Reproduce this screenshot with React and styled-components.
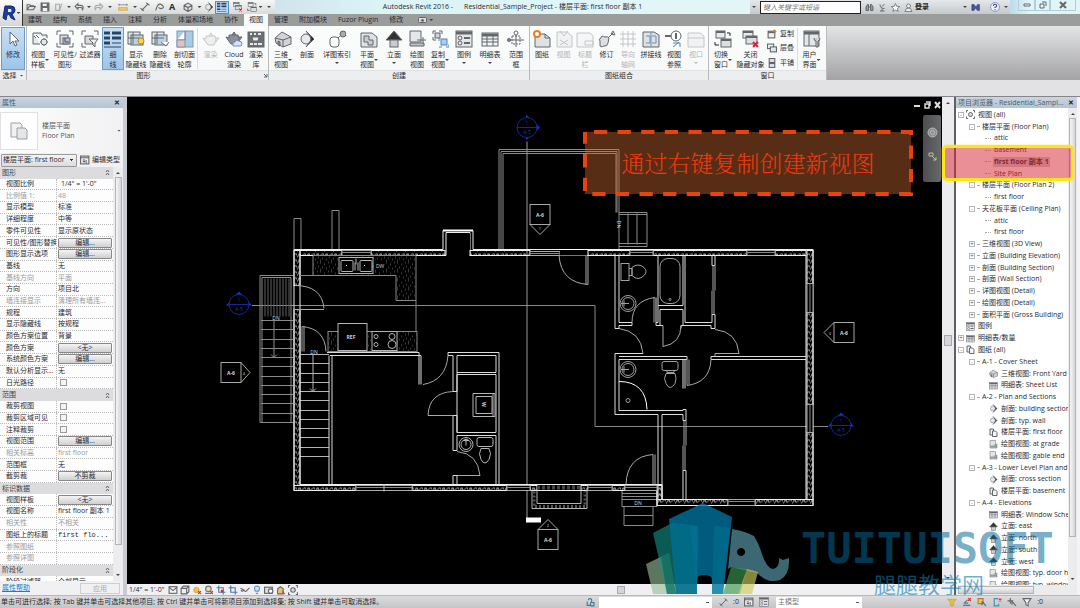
import React from 'react';
import styled, { createGlobalStyle, css } from 'styled-components';

const GlobalStyle = createGlobalStyle`
    * {
        box-sizing: border-box;
    }

    body {
        margin: 0;
        font-family: "Open Sans", "Noto Sans CJK SC", sans-serif;
        font-size: 7px;
        line-height: 10px;
        color: #2b2b2e;
        background: #e2e2e4;
    }

    button, input, select {
        font: inherit;
        color: inherit;
        margin: 0;
        padding: 0;
        border: none;
        background: none;
    }
`;

const Page = styled.div`
    position: relative;
    display: flex;
    flex-direction: column;
    height: 100vh;
    overflow: hidden;
`;

const Caret = styled.span`
    flex: none;
    width: 4px;
    height: 2px;
    background: #444;
    clip-path: polygon(0 0, 100% 0, 50% 100%);
`;

const Svg = styled.svg`
    display: block;
    flex: none;
    fill: none;
    stroke: #63666a;
    stroke-width: 1;
`;

/* ---------- header ---------- */

const Header = styled.header`
    display: grid;
    grid-template-columns: 23px 1fr;
    grid-template-rows: 14px 12px;
    background: #9b9d9d;
`;

const AppButton = styled.button`
    grid-row: 1 / 3;
    display: flex;
    align-items: center;
    justify-content: center;
    gap: 1px;
    background: linear-gradient(#fdfdfd, #d4d6d8);
    border-right: 1px solid #333;
`;

const TitleBar = styled.div`
    display: flex;
    align-items: stretch;
    background: linear-gradient(90deg, #cfe4ec 250px, #dcf4f6 360px, #e2f6f8 700px);
`;

const QuickAccess = styled.div`
    display: flex;
    align-items: center;
    width: 252px;
    padding-left: 1px;
    background: linear-gradient(#f6f6f6, #d9dadb);
`;

const QuickButton = styled.button`
    display: flex;
    align-items: center;
    justify-content: center;
    width: ${(props) => props.$width}px;
    height: 13px;
    font-size: 9px;
    ${(props) => props.$active && css`
        background: #bfdcf5;
        border: 1px solid #4b8fc9;
    `}
`;

const Title = styled.h1`
    flex: 1;
    display: flex;
    justify-content: center;
    gap: 11px;
    margin: 0;
    font-size: 7px;
    font-weight: 400;
    line-height: 14px;
    white-space: nowrap;
`;

const InfoCenter = styled.div`
    display: flex;
    align-items: center;
    gap: 4px;
    padding: 0 2px;
    background: linear-gradient(#e4e8ea, #c6c9cb);
`;

const SearchInput = styled.input`
    width: 101px;
    height: 13px;
    padding: 0 2px;
    background: #fff;
    border: 1px solid #222;
    font-style: italic;

    &::placeholder {
        color: #777;
    }
`;

const InfoButton = styled.button`
    display: flex;
    align-items: center;
    gap: 2px;
    min-width: 9px;
    font-weight: 700;
`;

const Spacer = styled.span`
    width: ${(props) => props.$width}px;
`;

const WindowButtons = styled.div`
    display: flex;
    align-items: flex-start;
    width: 70px;
    padding-left: 8px;
    background: linear-gradient(90deg, #bcdcea, #e0f5f8 20px);
`;

const WindowButton = styled.button`
    display: flex;
    align-items: center;
    justify-content: center;
    width: ${(props) => props.$width}px;
    height: 11px;
    border: 1px solid #b5cdd6;
    border-top: none;
`;

const Tabs = styled.nav`
    display: flex;
    gap: 1px;
    align-items: stretch;
`;

const Tab = styled.button`
    padding: 0 5px;
    line-height: 12px;
    background: ${(props) => (props.$active ? '#f7f8f8' : 'transparent')};
`;

const TabOptions = styled.button`
    display: flex;
    align-items: center;
    gap: 2px;
    margin-left: 9px;
`;

/* ---------- ribbon ---------- */

const Ribbon = styled.div`
    display: flex;
    height: 54px;
    background: linear-gradient(#e3e4e6, #a3a3a5);
`;

const Panel = styled.section`
    display: flex;
    flex-direction: column;
    background: linear-gradient(#fbfdfd, #f6f7f7);
    border-right: 1px solid #b9bbbd;
`;

const PanelBody = styled.div`
    flex: 1;
    display: flex;
    padding: 1px 1px 0;
`;

const PanelTitle = styled.div`
    display: flex;
    align-items: center;
    justify-content: center;
    gap: 3px;
    height: 10px;
    background: #edeeef;
    border-top: 1px solid #e0e1e2;
`;

const TitleText = styled.span`
    flex: ${(props) => (props.$fill ? 1 : 'none')};
    text-align: center;
`;

const ToolButton = styled.button`
    display: flex;
    flex-direction: column;
    align-items: center;
    gap: 2px;
    width: ${(props) => props.$width}px;
    height: 43px;
    padding-top: 3px;
    line-height: 10px;
    white-space: nowrap;
    opacity: ${(props) => (props.$disabled ? 0.35 : 1)};
    ${(props) => props.$active && css`
        background: linear-gradient(#cbe0f3, #9cc4ea);
        box-shadow: inset 0 0 0 1px #6f9dc6;
    `}
`;

const ToolLabel = styled.span`
    display: flex;
    flex-direction: ${(props) => (props.$caret === 'below' ? 'column' : 'row')};
    align-items: center;
    gap: ${(props) => (props.$caret === 'below' ? 2 : 0)}px;
`;

const Lines = styled.span`
    display: flex;
    flex-direction: column;
    align-items: center;
`;

const PanelDivider = styled.span`
    width: 1px;
    margin: 1px 0;
    background: #dcdddf;
`;

const SmallTools = styled.div`
    display: flex;
    flex-direction: column;
    justify-content: space-around;
    width: 32px;
    height: 43px;
    padding-left: 2px;
`;

const SmallTool = styled.button`
    display: flex;
    align-items: center;
    gap: 3px;
`;

const OptionsBar = styled.div`
    height: 16px;
    background: #e2e2e4;
`;

const icons = {
    cursor: <path d="M6 2v12l3-3 2 5 2-1-2-4h4z" fill="#fff" />,
    template: <g><path d="M2 3h8l1 2h5v3M2 3v11h7" fill="#e4e6e8" /><path d="M13 8v8M9 12h8M3 6l2 2M5 5l3 3" /><circle cx="13" cy="12" r="3" fill="#e4e6e8" /></g>,
    visibility: <g><path d="M1 5V1h4M13 1h4v4M1 13v4h4M17 13v4h-4" /><rect x="4" y="5" width="8" height="9" fill="#d8dade" /><rect x="7" y="8" width="7" height="6" fill="#b8bdd2" /><path d="M9 8v4h4" stroke="#4a4c66" strokeWidth="1" /></g>,
    filter: <g><path d="M1 5V1h4M13 1h4v4M1 13v4h4" /><path d="M4 6h8v8H4z" fill="#d8dade" /><path d="M8 9h9l-3 4v4l-2-2v-2z" fill="#eee" /></g>,
    thin: <g stroke="#274468"><path d="M0 3h6M8 3h9M0 8h6M8 8h9M0 13h6" strokeWidth="3" /><path d="M8 13h9M0 17h17" /></g>,
    show: <g><rect x="1" y="2" width="12" height="12" fill="#dfe8ef" /><rect x="4" y="5" width="12" height="10" fill="#b9d4e8" /><path d="M6 2v12M1 8h12" /><circle cx="14" cy="11" r="3" fill="#ffd44a" stroke="#b98b10" /></g>,
    hide: <g><rect x="1" y="2" width="12" height="12" fill="#dfe8ef" /><rect x="4" y="5" width="12" height="10" fill="#b9d4e8" /><path d="M6 2v12M1 8h12" /><path d="M10 12l5 4 3-4" fill="#fff" stroke="#667" /></g>,
    cut: <g><rect x="1" y="1" width="16" height="16" fill="#a9cbe6" stroke="#7b98b0" /><path d="M9 1v9H1" fill="#fff" /><path d="M1 10h8v7H1z" fill="#e7c0b8" stroke="#7b98b0" /></g>,
    teapot: <path d="M4 6h9l1 4-2 5H6L3 11 1 8l3 1zM14 8h3l-3 4M7 6l2-3 2 3" fill="#d6d8dc" />,
    teapotCloud: <g><path d="M4 5h9l1 4-2 5H6L3 10 1 7l3 1zM14 7h3l-3 4M7 5l2-3 2 3" fill="#8c9096" /><path d="M8 16q-1-4 2-4 1-3 4-1 3 0 3 3 0 2-2 2z" fill="#d5e4f4" stroke="#6d8ec0" /></g>,
    gallery: <g><rect x="1" y="2" width="16" height="15" fill="#6b6e74" /><path d="M3 4h2M7 4h2M11 4h3M3 14h3M7 14h3M11 14h4" stroke="#e8e8e8" strokeWidth="2" /><path d="M5 7h7l-1 4H6z" fill="#eee" /></g>,
    house: <g><path d="M1 8l7-6 9 5v7l-8 3-7-4z" fill="#d2d4d8" /><path d="M1 8l8 2 8-3M9 10v7" /><path d="M4 11v4l2 1v-4z" fill="#888c92" /></g>,
    section: <g><circle cx="8" cy="9" r="5" fill="#e6e8ea" /><path d="M8 1l8 8-8 8 3-4q4-4 0-8z" fill="#222" /></g>,
    callout: <g><rect x="2" y="7" width="9" height="10" rx="3" /><path d="M10 8l3-3" /><circle cx="15" cy="4" r="3" fill="#aaa" /></g>,
    plan: <g><path d="M1 3h11l5 4v10H1z" fill="#dfe2e5" /><path d="M4 6h5v4h4v5H8v-3H4z" fill="#c8cbd0" /></g>,
    elevation: <g><path d="M9 1l8 9H1z" fill="#333" /><rect x="5" y="10" width="8" height="7" fill="#c9ccd0" /></g>,
    drafting: <g><path d="M2 1h11v11H2z" fill="#e4e6e8" /><path d="M2 13h14v3H2zM9 10h9M15 7v7" fill="#bfc2c7" /></g>,
    duplicate: <g><path d="M2 4V1h3M8 1h3v3M2 7v3h3" /><rect x="4" y="3" width="5" height="5" fill="#d0d2d5" /><rect x="10" y="9" width="6" height="6" fill="#a9cdf0" stroke="#4d86c0" /><path d="M8 17h3M15 17h3v-3M8 11v-3" stroke="#4d86c0" /></g>,
    legend: <g><rect x="1" y="1" width="16" height="16" fill="#e4e6e8" /><path d="M1 3h16" strokeWidth="3" /><circle cx="5" cy="8" r="2" /><circle cx="5" cy="13" r="2" /><path d="M9 8h6M9 13h6" strokeWidth="2" /></g>,
    schedule: <g><rect x="1" y="3" width="16" height="13" fill="#f2f3f4" /><path d="M1 5h16" strokeWidth="3" /><path d="M1 9h16M1 12h16M6 6v10M12 6v10" /></g>,
    scope: <g><path d="M9 4v13M1 10h16" /><path d="M5 6h8v8H5z" strokeDasharray="2 1" /><circle cx="9" cy="3" r="2" fill="#fff" /><circle cx="2" cy="10" r="1.500" fill="#88b" /></g>,
    sheet: <g><path d="M2 4h10l5 4v9H2z" fill="#dfe2e5" /><path d="M12 4v4h5" /><circle cx="4" cy="4" r="3" stroke="#e08328" strokeWidth="2" fill="#fff" /></g>,
    sheetView: <g><path d="M2 2h10l5 4v11H2z" fill="#dfe2e5" /><path d="M5 1l4 5 4-5M5 10l8 5M13 10l-8 5" /></g>,
    titleBlock: <g><path d="M1 3h13l3 3v11H1z" fill="#eceded" /><path d="M9 11h8v4H9z" /></g>,
    revision: <g><path d="M2 9q-2-2 1-3 0-3 4-1 3-1 4 1l-1 5q-1 4-4 3-4 2-4-1z" fill="#dcdee1" transform="translate(0 2)" /><path d="M10 8l5-5M13 4l2-3 2 4z" /></g>,
    grid: <path d="M4 1v16M9 1v16M14 1v16M1 4h16M1 9h16M1 14h16" />,
    matchline: <g><path d="M1 2h11l5 3v12H1z" fill="#dfe2e5" /><path d="M9 2v15M4 6h4v7H4M10 6h4v7h-4" stroke="#6a8fb8" /></g>,
    viewRef: <g><circle cx="11" cy="6" r="5" fill="#fff" /><path d="M0 6h6M11 3v6" strokeWidth="2" /><path d="M8 13h7v4M8 17l6-5" stroke="#4d86c0" /></g>,
    viewport: <g><path d="M1 3h12l4 3v11H1z" fill="#e3e4e6" /><path d="M1 8h16" /></g>,
    switchWin: <g><rect x="2" y="1" width="9" height="7" fill="#e8eaec" /><rect x="7" y="9" width="10" height="8" fill="#dcdfe2" /><path d="M2 2h9M7 10h10" strokeWidth="2" /><path d="M13 3h3v3M5 15H1v-3" stroke="#222" /></g>,
    closeWin: <g><rect x="1" y="1" width="10" height="7" fill="#e8eaec" /><rect x="4" y="6" width="11" height="8" fill="#dcdfe2" /><path d="M1 2h10M4 7h11" strokeWidth="2" /><path d="M11 12l5 5M16 12l-5 5" stroke="#d2243c" strokeWidth="2" /></g>,
    userUi: <g><rect x="1" y="1" width="15" height="15" fill="#e4e6e8" /><path d="M1 3h15" strokeWidth="3" /><path d="M6 4v12" /><path d="M11 8q0 3 2 3v6h2v-6q2 0 2-3" fill="#ccc" /></g>,
    copyWin: <g><rect x="2" y="4" width="12" height="12" fill="#eef0f2" strokeWidth="2" /><path d="M2 6h12" strokeWidth="3" /><path d="M12 2l4 4" stroke="#e07828" strokeWidth="4" /></g>,
    cascade: <g strokeWidth="2"><rect x="1" y="2" width="11" height="8" /><rect x="6" y="7" width="11" height="9" fill="#e4e6e8" /></g>,
    tile: <g strokeWidth="2"><rect x="4" y="1" width="10" height="7" fill="#e4e6e8" /><rect x="4" y="10" width="10" height="7" fill="#e4e6e8" /></g>,
    open: <path d="M2 14V5h5l2 2h6M2 14l4-6h11l-4 6z" strokeWidth="2" />,
    save: <g><path d="M2 2h14v14H2z" fill="#666a70" strokeWidth="2" /><path d="M5 3h7v4H5zM5 11h8v5H5z" fill="#f2f2f2" stroke="none" /></g>,
    sync: <g stroke="#aaa" strokeWidth="2"><path d="M3 4h7v11H3z" /><path d="M14 3l-4 12" /></g>,
    undo: <path d="M7 3L2 8l5 5v-3h5q4 0 3 5 4-9-3-9H7z" strokeWidth="2" />,
    redo: <path d="M11 3l5 5-5 5v-3H6q-4 0-3 5-4-9 3-9h5z" stroke="#aaa" strokeWidth="2" />,
    measure: <g stroke="#d79a24"><path d="M1 10h16v5H1z" fill="#f0c568" /><path d="M1 5h16M2 3v4M16 3v4" stroke="#555" /></g>,
    dimension: <path d="M3 15L15 3M1 11l6 5M11 1l6 5" strokeWidth="2" />,
    tag: <path d="M3 15l3-8M6 7q4-6 9-1t-3 6l-4-2" strokeWidth="2" />,
    box3d: <path d="M9 2l7 4v7l-7 4-7-4V6zM2 6l7 4 7-4M9 10v7" strokeWidth="2" fill="#ddd" />,
    sun: <g><circle cx="8" cy="9" r="5" fill="#f3c04a" stroke="#c88a20" /><path d="M11 11l5 5M16 11l-5 5" stroke="#c9302c" strokeWidth="2" /></g>,
    cube: <g strokeWidth="2"><path d="M2 6h10v10H2zM2 6l4-4h10v10l-4 4M12 6l4-4" fill="#eee" /></g>,
    shadow: <g><circle cx="8" cy="7" r="5" fill="#e8dca8" stroke="#777" strokeWidth="2" /><path d="M2 15h9" strokeWidth="2" /><path d="M11 11l5 5M16 11l-5 5" stroke="#c9302c" strokeWidth="2" /></g>,
    crop: <g strokeWidth="2"><path d="M5 1v12h12M1 5h12v12" stroke="#5078a0" /><path d="M9 9l4 4M13 9l-4 4" stroke="#c9302c" /></g>,
    cropView: <path d="M5 1v12h12M1 5h12v12" stroke="#3f78b4" strokeWidth="2" />,
    glasses: <path d="M1 6l6 3q3 5 5 1l5-5M7 9q-4 4-5 0" strokeWidth="2" />,
    bulb: <path d="M6 11q-4-9 3-9t3 9zM7 15h4" fill="#cfe6f7" stroke="#5e96c2" strokeWidth="2" />,
    camera: <g strokeWidth="2"><rect x="1" y="4" width="14" height="11" fill="#ddd" /><circle cx="12" cy="11" r="4" fill="#fff" /></g>,
    paint: <g strokeWidth="2"><path d="M3 16V7l5-4 5 4v9z" fill="#e9c46a" /><path d="M11 12l5 4" stroke="#c33" /></g>,
    scale: <g strokeWidth="2"><rect x="2" y="3" width="14" height="12" fill="#f3f3f3" /><path d="M2 4l7 6 7-6" /></g>,
    binoculars: <path d="M2 15V8l3-5h2v12zM16 15V8l-3-5h-2v12zM7 8h4" fill="#999" strokeWidth="2" />,
    dish: <path d="M4 3q0 8 9 8M8 7l5-5M8 11v5M4 16h9" strokeWidth="2" />,
    star: <path d="M9 1l2.400 5.600 6 .5-4.600 4 1.400 6L9 13.900 3.800 17l1.400-6-4.600-4 6-.4z" fill="#fff" strokeWidth="1.500" />,
    person: <path d="M9 2a4 4 0 1 1 0 8 4 4 0 0 1 0-8zM2 17q1-7 7-7t7 7z" fill="#eee" strokeWidth="1.500" />,
    exchange: <path d="M2 3h4l4 5 3-5h4v12h-4l-4-5-3 5H2zM2 3v12" fill="#4356a0" stroke="#333b80" />,
    help: <g><circle cx="9" cy="9" r="8" fill="#eef0fb" stroke="#5560a0" /><path d="M6 7q0-3 3-3t3 3q0 1-3 3v1M9 13v2" stroke="#3a4590" strokeWidth="2" /></g>,
    link: <path d="M4 8v7h6v-5M6 6a3 3 0 0 1 6 0v3M10 10h6v6h-6" stroke="#3a7ba0" strokeWidth="2" />,
    funnel: <path d="M2 3h14l-5 7v6l-4-2v-4z" fill="#f5f5f5" strokeWidth="2" />,
    funnelYellow: <path d="M1 4h16l-5 6v6H6v-6z" fill="#e8bb3c" stroke="#c99a30" strokeWidth="1" />,
    selectX: <g strokeWidth="2"><path d="M2 15h13M4 11l6-6M3 11h8" stroke="#4a7ba0" /><path d="M11 2l5 5M16 2l-5 5" stroke="#c9302c" /></g>,
    selectPin: <g strokeWidth="2"><path d="M2 3h9v9H2z" fill="#f0c568" stroke="#c07a30" /><path d="M9 8l7 8M9 8v7" /></g>,
    selectFace: <g strokeWidth="2"><path d="M11 3H4v13h8v-4" stroke="#4a8fa8" /><path d="M12 3l5 5M17 3l-5 5" stroke="#c9302c" /></g>,
    drag: <path d="M6 2v10M1 7h10M9 8l7 8M9 8v6" strokeWidth="2" />,
    region: <g strokeWidth="2"><circle cx="9" cy="9" r="4" fill="#ddd" /><path d="M1 5V1h3M14 1h3v4M1 13v4h3M17 13v4h-3" /></g>,
    worksets: <g strokeWidth="2"><rect x="1" y="2" width="15" height="14" fill="#eee" /><path d="M1 5h15M5 9h4M5 12h4M11 9v6" /></g>,
    pages: <g strokeWidth="2"><path d="M2 2h7v12H2z" fill="#eef0f2" /><path d="M7 6h6l3 3v8H7z" fill="#f4f5f6" /></g>,
};

const Icon = ({ name, size = 18 }) => (
    <Svg width={size} height={size} viewBox="0 0 18 18" aria-hidden="true">{icons[name]}</Svg>
);

const quickTools = [
    { icon: 'open', w: 14 },
    { icon: 'save', w: 14 },
    { icon: 'sync', w: 14 },
    { w: 6 },
    { icon: 'undo', w: 14 },
    { w: 6 },
    { icon: 'redo', w: 14 },
    { w: 8 },
    { icon: 'measure', w: 18 },
    { w: 6 },
    { icon: 'dimension', w: 14 },
    { icon: 'tag', w: 13 },
    { text: 'A', w: 14 },
    { icon: 'box3d', w: 18 },
    { w: 5 },
    { icon: 'section', w: 13 },
    { icon: 'thin', w: 14, active: true },
    { icon: 'closeWin', w: 18 },
    { icon: 'switchWin', w: 10 },
    { w: 7 },
    { w: 10 },
];

const tabs = ['建筑', '结构', '系统', '插入', '注释', '分析', '体量和场地', '协作', '视图', '管理', '附加模块', 'Fuzor Plugin', '修改'];

const graphicTools = [
    { icon: 'template', lines: ['视图', '样板'], w: 24, caret: 'side' },
    { icon: 'visibility', lines: ['可见性/', '图形'], w: 26 },
    { icon: 'filter', lines: ['过滤器'], w: 24 },
    { icon: 'thin', lines: ['细', '线'], w: 22, active: true },
    { icon: 'show', lines: ['显示', '隐藏线'], w: 24 },
    { icon: 'hide', lines: ['删除', '隐藏线'], w: 24 },
    { icon: 'cut', lines: ['剖切面', '轮廓'], w: 25 },
    { divider: true },
    { icon: 'teapot', lines: ['渲染'], w: 25, disabled: true },
    { icon: 'teapotCloud', lines: ['Cloud', '渲染'], w: 22 },
    { icon: 'gallery', lines: ['渲染', '库'], w: 22 },
];

const createTools = [
    { icon: 'house', lines: ['三维', '视图'], w: 26, caret: 'side' },
    { icon: 'section', lines: ['剖面'], w: 22 },
    { icon: 'callout', lines: ['详图索引'], w: 38, caret: 'below' },
    { icon: 'plan', lines: ['平面', '视图'], w: 26, caret: 'side' },
    { icon: 'elevation', lines: ['立面'], w: 24, caret: 'below' },
    { icon: 'drafting', lines: ['绘图', '视图'], w: 22 },
    { icon: 'duplicate', lines: ['复制', '视图'], w: 24, caret: 'side' },
    { icon: 'legend', lines: ['图例'], w: 24, caret: 'below' },
    { icon: 'schedule', lines: ['明细表'], w: 28, caret: 'below' },
    { icon: 'scope', lines: ['范围', '框'], w: 24 },
];

const sheetTools = [
    { icon: 'sheet', lines: ['图纸'], w: 22 },
    { icon: 'sheetView', lines: ['视图'], w: 21, disabled: true },
    { icon: 'titleBlock', lines: ['标题', '栏'], w: 22, disabled: true },
    { icon: 'revision', lines: ['修订'], w: 21 },
    { icon: 'grid', lines: ['导向', '轴网'], w: 22, disabled: true },
    { icon: 'matchline', lines: ['拼接线'], w: 24 },
    { icon: 'viewRef', lines: ['视图', '参照'], w: 22 },
    { icon: 'viewport', lines: ['视口'], w: 22, caret: 'below', disabled: true },
];

const Tool = ({ tool }) => {
    if (tool.divider) return <PanelDivider />;
    return (
        <ToolButton $width={tool.w} $active={tool.active} $disabled={tool.disabled} disabled={tool.disabled}>
            <Icon name={tool.icon} size={18} />
            <ToolLabel $caret={tool.caret}>
                <Lines>
                    {tool.lines.map((line) => <span key={line}>{line}</span>)}
                </Lines>
                {tool.caret && <Caret />}
            </ToolLabel>
        </ToolButton>
    );
};

const RibbonPanel = ({ title, tools }) => (
    <Panel>
        <PanelBody>
            {tools.map((tool, i) => <Tool key={i} tool={tool} />)}
        </PanelBody>
        <PanelTitle>{title}</PanelTitle>
    </Panel>
);

/* ---------- properties palette ---------- */

const Workspace = styled.main`
    flex: 1;
    display: flex;
    min-height: 0;
    border-top: 1px solid #85868c;
`;

const Properties = styled.aside`
    display: flex;
    flex-direction: column;
    width: 127px;
    background: #f1f1f3;
    border-right: 4px solid #c9cbd0;
`;

const PaletteHeader = styled.div`
    display: flex;
    align-items: center;
    justify-content: space-between;
    height: 11px;
    padding: 0 2px;
    color: #4c5a68;
    background: linear-gradient(#c9d5e1, #b4c4d4);
    white-space: nowrap;
`;

const CloseButton = styled.button`
    padding: 0 1px;
    font-weight: 700;
    color: #222;
`;

const TypeSelector = styled.button`
    display: flex;
    align-items: center;
    gap: 4px;
    height: 45px;
    padding-right: 2px;
    text-align: left;
    color: #55565a;
    background: linear-gradient(90deg, #fdfdfd, #f1f1f3);
`;

const TypeThumb = styled.span`
    display: flex;
    align-items: center;
    justify-content: center;
    width: 38px;
    height: 38px;
    background: #fff;
    border: 1px solid #e0e0e2;
`;

const TypeName = styled.span`
    flex: 1;
`;

const TypeRow = styled.div`
    display: flex;
    align-items: center;
    gap: 3px;
    height: 14px;
    padding-left: 1px;
`;

const TypeSelect = styled.select`
    width: 76px;
    height: 13px;
    padding: 0 1px;
    appearance: none;
    border: 1px solid #999;
    border-radius: 1px;
    background: linear-gradient(45deg, transparent 50%, #333 50%) right 5px center / 2px 2px no-repeat,
        linear-gradient(-45deg, transparent 50%, #333 50%) right 3px center / 2px 2px no-repeat,
        linear-gradient(#f4f4f4, #dcdcde);
`;

const EditType = styled.button`
    display: flex;
    align-items: center;
    gap: 2px;
`;

const PropScroll = styled.div`
    flex: 1;
    display: flex;
    min-height: 0;
    overflow: hidden;
`;

const PropGrid = styled.div`
    flex: 1;
    display: grid;
    grid-auto-rows: minmax(0, 1fr);
    height: calc(100% + 7px);
    min-width: 0;
    background: #fdfdfd;
`;

const PropRow = styled.div`
    display: grid;
    grid-template-columns: 57px 1fr;
    border-bottom: 1px dotted #bbb;
    color: ${(props) => (props.$muted ? '#9a9a9d' : '#2b2b2e')};
`;

const PropLabel = styled.label`
    display: flex;
    align-items: center;
    padding-left: 6px;
    overflow: hidden;
    white-space: nowrap;
    border-right: 1px dotted #bbb;
`;

const PropValue = styled.div`
    display: flex;
    align-items: center;
    min-width: 0;
    padding: 0 1px;
`;

const PropInput = styled.input`
    width: 100%;
    line-height: 10px;
    height: 10px;
    padding-left: ${(props) => (props.$indent ? 3 : 0)}px;
    font-family: ${(props) => (props.$mono ? '"Liberation Mono", monospace' : 'inherit')};
`;

const PropButton = styled.button`
    width: 100%;
    height: 10px;
    line-height: 8px;
    background: linear-gradient(#f4f4f4, #cfcfd2);
    border: 1px solid #888;
    border-radius: 1px;
`;

const PropCheck = styled.input`
    width: 7px;
    height: 7px;
    margin-left: 2px;
    appearance: none;
    background: #f4f4f4;
    border: 1px solid #9b9b9e;
`;

const GroupRow = styled.div`
    display: flex;
    align-items: center;
    justify-content: space-between;
    padding: 0 3px 0 2px;
    color: #444;
    background: #dcdcde;
`;

const PropFooter = styled.div`
    display: flex;
    align-items: center;
    justify-content: space-between;
    height: 14px;
    padding: 0 3px 0 2px;
`;

const HelpLink = styled.a`
    color: #2678c8;
`;

const ApplyButton = styled.button`
    width: 40px;
    height: 11px;
    color: #aaa;
    border: 1px solid #cfcfd2;
`;

const Track = styled.div`
    display: flex;
    flex-direction: column;
    align-items: center;
    justify-content: space-between;
    width: ${(props) => props.$width}px;
    padding: 5px 0;
    background: #ececee;
`;

const Thumb = styled.span`
    flex: ${(props) => props.$grow} 1 0;
    width: 7px;
    margin: 3px 0;
    border: 1px solid #b4b4b8;
    background: linear-gradient(90deg, #f6f6f6, #d4d4d8);
`;

const TrackGap = styled.span`
    flex: ${(props) => props.$grow} 1 0;
`;

const CaretUp = styled(Caret)`
    transform: rotate(180deg);
`;

const properties = [
    { group: '图形' },
    { label: '视图比例', value: '1/4" = 1\'-0"', indent: true },
    { label: '比例值 1:', value: '48', muted: true },
    { label: '显示模型', value: '标准' },
    { label: '详细程度', value: '中等' },
    { label: '零件可见性', value: '显示原状态' },
    { label: '可见性/图形替换', button: '编辑...' },
    { label: '图形显示选项', button: '编辑...' },
    { label: '基线', value: '无' },
    { label: '基线方向', value: '平面', muted: true },
    { label: '方向', value: '项目北' },
    { label: '墙连接显示', value: '清理所有墙连...', muted: true },
    { label: '规程', value: '建筑' },
    { label: '显示隐藏线', value: '按规程' },
    { label: '颜色方案位置', value: '背景' },
    { label: '颜色方案', button: '<无>' },
    { label: '系统颜色方案', button: '编辑...' },
    { label: '默认分析显示...', value: '无' },
    { label: '日光路径', check: true },
    { group: '范围' },
    { label: '裁剪视图', check: true },
    { label: '裁剪区域可见', check: true },
    { label: '注释裁剪', check: true },
    { label: '视图范围', button: '编辑...' },
    { label: '相关标高', value: 'first floor', muted: true },
    { label: '范围框', value: '无' },
    { label: '截剪裁', button: '不剪裁' },
    { group: '标识数据' },
    { label: '视图样板', button: '<无>' },
    { label: '视图名称', value: 'first floor 副本 1' },
    { label: '相关性', value: '不相关', muted: true },
    { label: '图纸上的标题', value: 'first flo...', mono: true },
    { label: '参照图纸', value: '', muted: true },
    { label: '参照详图', value: '', muted: true },
    { group: '阶段化' },
    { label: '阶段过滤器', value: '全部显示' },
];

const Property = ({ item, id }) => {
    if (item.group) {
        return (
            <GroupRow>
                <span>{item.group}</span>
                <Svg width="5" height="7" viewBox="0 0 5 7"><path d="M1 3l1.500-2L4 3M1 6l1.500-2L4 6" /></Svg>
            </GroupRow>
        );
    }
    return (
        <PropRow $muted={item.muted}>
            <PropLabel htmlFor={id}>{item.label}</PropLabel>
            <PropValue>
                {item.button && <PropButton id={id}>{item.button}</PropButton>}
                {item.check && <PropCheck id={id} type="checkbox" />}
                {item.value !== undefined && (
                    <PropInput id={id} defaultValue={item.value} $indent={item.indent} $mono={item.mono} />
                )}
            </PropValue>
        </PropRow>
    );
};

/* ---------- drawing area ---------- */

const Center = styled.section`
    flex: 1;
    display: flex;
    flex-direction: column;
    min-width: 0;
`;

const CanvasRow = styled.div`
    flex: 1;
    display: flex;
    min-height: 0;
`;

const Canvas = styled.div`
    position: relative;
    flex: 1;
    min-width: 0;
    background: #000;
`;

const PlanSvg = styled.svg`
    display: block;
    width: 100%;
    height: 100%;
    fill: none;
    stroke: #b4b4b4;
    stroke-width: 1;
    font-family: "Open Sans", sans-serif;
    font-size: 5px;

    text {
        fill: #d4d4d4;
        stroke: none;
        text-anchor: middle;
    }
`;

const Callout = styled.div`
    position: absolute;
    top: 33px;
    right: 29px;
    display: flex;
    align-items: center;
    justify-content: center;
    width: 330px;
    height: 66px;
    font-family: "Noto Serif CJK SC", "Noto Sans CJK SC", serif;
    font-size: 23px;
    font-weight: 300;
    color: #ee3a10;
`;

const CalloutFrame = styled.svg`
    position: absolute;
    inset: 0;
    width: 100%;
    height: 100%;
`;

const CalloutText = styled.span`
    position: relative;
`;

const ViewButtons = styled.div`
    position: absolute;
    top: 4px;
    right: 1px;
    display: flex;
    gap: 3px;
`;

const ViewButton = styled.button`
    display: flex;
`;

const NavBar = styled.div`
    position: absolute;
    top: 18px;
    right: 1px;
    display: flex;
    flex-direction: column;
    align-items: center;
    gap: 14px;
    width: 18px;
    height: 67px;
    padding-top: 12px;
    background: linear-gradient(90deg, #4c4e50, #666869);
    border-radius: 2px;
`;

const ViewBar = styled.div`
    display: flex;
    align-items: center;
    gap: 2px;
    height: 11px;
    padding-left: 2px;
    background: #f0eff2;
`;

const ViewScale = styled.span`
    margin-right: 1px;
    white-space: nowrap;
`;

const HTrack = styled.div`
    flex: 1;
    display: flex;
    justify-content: center;
    padding-right: 12px;
`;

const HThumb = styled.span`
    width: 8px;
    height: 8px;
    background: #d4d4d8;
    border: 1px solid #a9a9ad;
`;

const VThumb = styled(HThumb)`
    height: 11px;
`;

// [x, y, width, height] of the insulated runs of the outer wall
const walls = [
    [300, 250, 42, 5], [371, 250, 74, 5], [470, 250, 60, 5], [588, 250, 42, 5], [653, 250, 94, 5], [775, 250, 31, 5],
    [294, 250, 6, 35], [294, 309, 6, 176],
    [807, 250, 6, 33], [807, 312, 6, 92], [807, 432, 6, 67],
    [294, 485, 62, 5], [412, 485, 95, 5], [530, 485, 7, 5], [581, 485, 7, 5], [612, 485, 13, 5],
    [657, 499, 71, 6], [755, 499, 58, 6], [657, 485, 5, 14],
];

const windows = [
    [342, 250, 29, 5], [530, 251, 30, 4], [630, 250, 23, 5], [747, 250, 28, 5],
    [807, 283, 6, 29], [807, 404, 6, 28],
    [356, 485, 56, 5], [507, 485, 23, 5], [588, 485, 24, 5], [625, 485, 32, 5], [728, 499, 27, 6],
];

// partitions, drawn as pairs of faces
const partitions = [
    'M327 352H419V384M330 355H421V384M329 355V484M332 355V484',
    'M448 352H499V484M448 352V355H453V391H457V355M457 355H496V372H457M457 374H496V432H457V374M453 415H457V432M453 415V450H457V435H496V484M457 475H453V484M457 475V484',
    'M615 255V328H619V325H632V322H619V255M656 297V322H658V255M656 322V325H663M658 305H683V255M660 309H683V325H681V328M660 309V325M685 255V322H712V314H715V328H711V325H681M712 255V265H715V255',
    'M643 353H615V414H658V499M619 356H687V359H619V410H683V409H686V420H683V414H662V499M683 359V388M685 359V388M806 356H711V359H806M683 470V499M686 470V499M683 470H686',
];

const doors = [
    'M294 309H324M295 285Q322 285 324 308',
    'M302 326V351M304 326V351M302 326Q325 328 326 351',
    'M423 384Q446 380 448 355',
    'M453 391Q429 392 428 415H453',
    'M457 451Q478 453 480 475H457',
    'M559 255Q561 282 588 284V255M586 255V284',
    'M655 297Q632 300 632 322M654 297V322',
    'M663 325V346Q681 343 681 325',
    'M619 328Q641 331 643 353',
    'M715 329Q737 331 739 353H715V356',
    'M687 359V385Q710 382 711 359M689 359V384',
    'M626 484Q627 456 653 454V484M655 454V484',
    'M713 265V290M715 265V290M712 290V314M714 290V314M684 420V445M686 420V445M683 445V470M685 445V470',
];

const steps = (from, count, gap) => Array.from({ length: count }, (_, i) => from + Math.round(i * gap));

const ElevationMark = ({ x, y, points, name, num, nx, ny }) => (
    <g stroke="#a8a8a8">
        <rect x={x} y={y} width="20" height="20" />
        <polyline points={points} />
        <text x={x + 10} y={y + 12} fontWeight="700">{name}</text>
        <text x={nx} y={ny} fontSize="4">{num}</text>
    </g>
);

const SectionMark = ({ x, y, turn }) => (
    <g stroke="#17249a">
        <g transform={`rotate(${turn} ${x} ${y})`}>
            <path d={`M${x - 13} ${y + 1}L${x} ${y - 13}L${x + 13} ${y + 1}z`} fill="#1b35c4" stroke="none" />
            <circle cx={x} cy={y} r="10" fill="#000" />
        </g>
        <path d={`M${x - 10} ${y}h20`} />
        <text x={x} y={y - 3} style={{ fill: '#2236a0' }}>1</text>
        <text x={x} y={y + 6} style={{ fill: '#2236a0' }}>A-5</text>
    </g>
);

const FloorPlan = () => (
    <PlanSvg viewBox="127 97 815 486" role="img" aria-label="first floor">
        <defs>
            <pattern id="batt" width="9" height="6" patternUnits="userSpaceOnUse">
                <path d="M0 5L3 1L4 4L8 1L9 3M1 2h2" stroke="#a4a4a4" />
            </pattern>
            <pattern id="granite" width="11" height="9" patternUnits="userSpaceOnUse">
                <path d="M1 1h1M5 3h1M9 1h1M3 6h1M7 7h1M10 5h1M1 8h1" stroke="#6d6d6d" />
            </pattern>
        </defs>

        {/* section lines */}
        <path d="M252 305H595V426H828" stroke="#8a8a8a" />
        <path d="M527 141V519" stroke="#9a9a9a" />
        <rect x="526" y="517" width="15" height="5" fill="#fff" stroke="none" />

        {/* deck, posts and outside stairs */}
        <g stroke="#8c8c8c">
            <path d="M499 249V149H619V249M503 249V153H616V212M501 249V151H617V212" />
            <path d="M294 249V218H301V249M332 249V210H339V249" />
            <path d="M619 212H647V246H619M619 214H647M619 243H647M628 213V244M637 213V244" />
            <path d="M293 275H260V422H293M262 277H291M262 277V422M291 277V422" />
            {steps(265, 9, 3).map((x) => <path key={x} d={`M${x} 278V316`} stroke="#606060" />)}
            {steps(320, 12, 9.25).map((y) => <path key={y} d={`M261 ${y}H293`} />)}
            <path d="M274 320V357M271 354L274 357L277 354" />
            <path d="M622 490H657V506H622zM622 493H657M622 496H657M622 499H657M624 506V525H653V506M624 515H653" />
        </g>

        {/* inside stairs */}
        {steps(354, 12, 9.25).map((y) => <path key={y} d={`M300 ${y}H329`} />)}
        <path d="M313 354V391M310 388L313 391L316 388" />

        {/* outer walls */}
        <path d="M294 249H443V230H473V249H813V505H657V490H294zM300 255H446V232H470V255H806V499H662V484H300z" stroke="#eee" strokeWidth="1" />
        <path d="M443 230H473" stroke="#fff" strokeWidth="2" />
        <rect x="447" y="233" width="23" height="22" fill="#000" stroke="none" />
        {walls.map(([x, y, w, h]) => (
            <rect key={`${x}-${y}`} x={x} y={y} width={w} height={h} fill="url(#batt)" stroke="#eee" />
        ))}
        {windows.map(([x, y, w, h]) => (
            <g key={`${x}-${y}`}>
                <rect x={x} y={y} width={w} height={h} fill="#000" stroke="#aaa" />
                <path d={w > h ? `M${x} ${y + 2}h${w}` : `M${x + 3} ${y}v${h}`} stroke="#888" />
            </g>
        ))}
        <path d="M384 484V491" />
        <rect x="560" y="249" width="27" height="6" fill="#000" stroke="none" />
        <path d="M560 249H588" stroke="#fff" />
        {partitions.map((d) => <path key={d} d={d} stroke="#dcdcdc" />)}
        {doors.map((d) => <path key={d} d={d} stroke="#a8a8a8" />)}

        {/* kitchen */}
        <path d="M313 255H416V300H396V275H313z" fill="url(#granite)" stroke="#888" />
        <path d="M300 275H313M416 300V331" stroke="#888" />
        <g fill="#000">
            <rect x="339" y="257" width="34" height="16" />
            <rect x="341" y="260" width="12" height="11" rx="1" />
            <rect x="360" y="260" width="12" height="11" rx="1" />
            <path d="M355 262V270M358 262V270M356 258V264" />
            <rect x="375" y="260" width="11" height="9" stroke="none" />
        </g>
        <path d="M346 265h1M364 265h1" stroke="#fff" />
        <rect x="328" y="331" width="89" height="20" fill="url(#granite)" stroke="#888" />
        <rect x="338" y="323" width="29" height="27" fill="#000" />
        <rect x="372" y="331" width="25" height="19" fill="#000" />
        <circle cx="376" cy="336" r="2" /><circle cx="392" cy="336" r="3" />
        <circle cx="376" cy="344" r="2" /><circle cx="392" cy="344" r="4" />

        {/* laundry and powder room */}
        <path d="M473 393H495V416H473zM476 396H492V413H476zM493 393V416" />
        <circle cx="466" cy="444" r="7" /><circle cx="466" cy="444" r="5" /><path d="M466 438V445M463 440H469" />
        <rect x="477" y="437" width="16" height="9" rx="2" />
        <path d="M482 446H489M481 448Q478 453 481 459Q485 466 489 459Q492 453 489 448z" />

        {/* bathrooms */}
        <g stroke="#a0a0a0">
            <rect x="660" y="258" width="20" height="45" rx="8" /><circle cx="670" cy="299" r="1" />
            <rect x="621" y="263" width="8" height="17" /><path d="M629 268h3v7h-3M632 267Q638 262 644 267Q648 271 644 275Q638 281 632 275z" />
            <circle cx="628" cy="303" r="8" /><circle cx="628" cy="303" r="6" /><path d="M621 303H629M624 300V306" />
            <circle cx="628" cy="369" r="8" /><circle cx="628" cy="369" r="6" /><path d="M621 369H629M624 366V372" />
            <rect x="662" y="361" width="16" height="9" rx="2" />
            <path d="M667 370H674V372H667zM666 373Q663 378 666 383Q670 391 675 383Q677 378 675 373z" />
            <path d="M619 381Q646 381 647 409" stroke="#fff" /><circle cx="628" cy="400" r="2" />
        </g>

        {/* fireplace */}
        <path d="M532 490V508H587V490M537 490V503H581V490" />
        <path d="M534 491V506H585V491" strokeDasharray="2 2" strokeWidth="3" stroke="#555" />
        <path d="M537 487H581" strokeDasharray="3 2" strokeWidth="4" stroke="#444" />

        <text x="380" y="267">DW</text>
        <text x="351" y="338" fontWeight="700">REF</text>
        <text x="276" y="319">DN</text>
        <text x="314" y="353">DN</text>
        <text x="638" y="504">DN</text>
        <text x="619" y="226" transform="rotate(90 619 224)">DN</text>
        <text x="484" y="406" fontWeight="700" transform="rotate(90 484 404)">W</text>

        <ElevationMark x={221} y={362} points="241,362 250,372 241,382" name="A-6" num="4" nx={244} ny={374} />
        <ElevationMark x={530} y={204} points="530,224 540,234 550,224" name="A-6" num="1" nx={540} ny={229} />
        <ElevationMark x={834} y={322} points="834,322 824,332 834,342" name="A-6" num="3" nx={830} ny={334} />
        <ElevationMark x={538} y={529} points="538,529 548,519 558,529" name="A-6" num="2" nx={548} ny={526} />
        <SectionMark x={239} y={304} turn={0} />
        <SectionMark x={527} y={127} turn={90} />
        <SectionMark x={841} y={425} turn={0} />
    </PlanSvg>
);

const viewIcons = ['scale', 'cube', 'sun', 'shadow', 'crop', 'cropView', 'glasses', 'bulb', 'camera', 'paint', 'region'];

/* ---------- project browser ---------- */

const Browser = styled.aside`
    position: relative;
    display: flex;
    flex-direction: column;
    width: 126px;
    padding-right: 3px;
    background: #f4f4f6;
    border-left: 2px solid #5e6064;
`;

const BrowserTitle = styled.span`
    flex: 1;
    overflow: hidden;
    text-overflow: ellipsis;
`;

const TreeArea = styled.div`
    flex: 1;
    display: flex;
    min-height: 0;
    overflow: hidden;
`;

const Tree = styled.ul`
    flex: 1;
    display: grid;
    grid-auto-rows: minmax(0, 1fr);
    height: calc(100% + 6px);
    min-width: 0;
    margin: 0;
    padding: 1px 0 0 2px;
    list-style: none;
    background: #fff;
    overflow: hidden;
`;

const TreeItem = styled.li`
    display: flex;
    align-items: center;
    gap: 2px;
    padding-left: ${(props) => props.$level * 11}px;
    white-space: nowrap;
    font-weight: ${(props) => (props.$selected ? 700 : 400)};
`;

const Toggle = styled.button`
    flex: none;
    display: flex;
    align-items: center;
    justify-content: center;
    width: 6px;
    height: 6px;
    font-size: 6px;
    line-height: 4px;
    color: #555;
    border: 1px solid #b6b6ba;
`;

const Branch = styled.span`
    flex: none;
    width: ${(props) => props.$width}px;
    border-top: 1px dotted #aaa;
`;

const Blank = styled.span`
    flex: none;
    width: ${(props) => props.$width}px;
`;

const NodeName = styled.span`
    padding: 0 1px;
    background: ${(props) => (props.$selected ? '#cfcfd4' : 'transparent')};
`;

const Highlight = styled.div`
    position: absolute;
    top: 48px;
    left: -14px;
    right: 6px;
    height: 36px;
    background: rgba(212, 40, 52, 0.52);
    border: 3px solid #fbe61c;
    border-radius: 5px;
    box-shadow: 0 0 2px #fbe61c;
    pointer-events: none;
`;

const BrowserScroll = styled.div`
    display: flex;
    align-items: center;
    height: 10px;
    padding: 0 12px 0 2px;
    background: #ececee;
`;

const BrowserThumb = styled.span`
    width: 76px;
    height: 8px;
    border: 1px solid #b4b4b8;
    background: linear-gradient(#f6f6f6, #cfcfd3);
`;

const tree = [
    { level: 0, name: '视图 (all)', open: true, icon: 'region' },
    { level: 1, name: '楼层平面 (Floor Plan)', open: true },
    { level: 2, name: 'attic' },
    { level: 2, name: 'basement' },
    { level: 2, name: 'first floor 副本 1', selected: true },
    { level: 2, name: 'Site Plan' },
    { level: 1, name: '楼层平面 (Floor Plan 2)', open: true },
    { level: 2, name: 'first floor' },
    { level: 1, name: '天花板平面 (Ceiling Plan)', open: true },
    { level: 2, name: 'attic' },
    { level: 2, name: 'first floor' },
    { level: 1, name: '三维视图 (3D View)', open: false },
    { level: 1, name: '立面 (Building Elevation)', open: false },
    { level: 1, name: '剖面 (Building Section)', open: false },
    { level: 1, name: '剖面 (Wall Section)', open: false },
    { level: 1, name: '详图视图 (Detail)', open: false },
    { level: 1, name: '绘图视图 (Detail)', open: false },
    { level: 1, name: '面积平面 (Gross Building)', open: false },
    { level: 0, name: '图例', icon: 'legend' },
    { level: 0, name: '明细表/数量', open: false, icon: 'schedule' },
    { level: 0, name: '图纸 (all)', open: true, icon: 'pages' },
    { level: 1, name: 'A-1 - Cover Sheet', open: true },
    { level: 2, name: '三维视图: Front Yard', icon: 'house' },
    { level: 2, name: '明细表: Sheet List', icon: 'schedule' },
    { level: 1, name: 'A-2 - Plan and Sections', open: true },
    { level: 2, name: '剖面: building section', icon: 'section' },
    { level: 2, name: '剖面: typ. wall', icon: 'section' },
    { level: 2, name: '楼层平面: first floor', icon: 'pages' },
    { level: 2, name: '绘图视图: at grade', icon: 'drafting' },
    { level: 2, name: '绘图视图: gable end', icon: 'drafting' },
    { level: 1, name: 'A-3 - Lower Level Plan and', open: true },
    { level: 2, name: '剖面: cross section', icon: 'section' },
    { level: 2, name: '楼层平面: basement', icon: 'pages' },
    { level: 1, name: 'A-4 - Elevations', open: true },
    { level: 2, name: '明细表: Window Sche', icon: 'schedule' },
    { level: 2, name: '立面: east', icon: 'elevation' },
    { level: 2, name: '立面: north', icon: 'elevation' },
    { level: 2, name: '立面: south', icon: 'elevation' },
    { level: 2, name: '立面: west', icon: 'elevation' },
    { level: 2, name: '绘图视图: typ. door h', icon: 'drafting' },
    { level: 2, name: '绘图视图: typ. window', icon: 'drafting' },
];

const TreeNode = ({ node }) => (
    <TreeItem $level={node.level} $selected={node.selected}>
        {node.open !== undefined && <Toggle>{node.open ? '-' : '+'}</Toggle>}
        {node.open === undefined && <Blank $width={node.level === 2 ? 3 : 6} />}
        {node.level === 1 && <Branch $width={2} />}
        {node.level === 2 && !node.icon && <Branch $width={6} />}
        {node.level === 2 && node.icon && <Blank $width={2} />}
        {node.icon && <Icon name={node.icon} size={9} />}
        <NodeName $selected={node.selected}>{node.name}</NodeName>
    </TreeItem>
);

/* ---------- status bar ---------- */

const StatusBar = styled.footer`
    display: flex;
    align-items: center;
    height: 13px;
    padding: 0 37px 0 1px;
    background: linear-gradient(#dcdcde, #c4c5c8);
    border-top: 1px solid #b8b8bc;
`;

const StatusText = styled.span`
    flex: 1;
    white-space: nowrap;
`;

const StatusGroup = styled.div`
    display: flex;
    align-items: center;
    gap: 5px;
    width: ${(props) => props.$width}px;
    justify-content: ${(props) => props.$align || 'flex-start'};
`;

const StatusSelect = styled.select`
    width: ${(props) => props.$width}px;
    height: 11px;
    padding: 0 2px;
    appearance: none;
    color: #77787c;
    background: linear-gradient(#555, #555) right 3px center / 3px 1px no-repeat, #fff;
`;

/* ---------- watermark ---------- */

const Watermark = styled.svg`
    position: absolute;
    right: 20px;
    bottom: 13px;
    width: 420px;
    height: 95px;
    pointer-events: none;
`;

const BrandName = styled.text`
    font-family: "DejaVu Sans Mono", monospace;
    font-size: 42px;
    font-weight: 700;
    fill: rgba(4, 105, 150, 0.53);
`;

const BrandSite = styled.text`
    font-family: "Noto Sans CJK SC", sans-serif;
    font-size: 22px;
    fill: rgba(8, 125, 175, 0.6);
`;

const Brand = () => (
    <Watermark viewBox="640 500 420 95">
        <path d="M646 564L669 553L676 594H653z" fill="rgba(150,190,155,0.62)" />
        <path d="M653 533L672 523L698 526L697 594H667z" fill="rgba(20,150,140,0.6)" />
        <path d="M661 557L669 553L676 594H667z" fill="rgba(0,90,70,0.5)" />
        <path d="M669 519L703 503L732 517L723 594H712V580Q712 575 704 575Q697 575 697 580V594H676z" fill="rgba(0,116,162,0.78)" />
        <path d="M669 523L690 526L697 594H676z" fill="rgba(0,90,100,0.25)" />
        <path d="M714 526L731 528L723 594H712z" fill="rgba(0,140,170,0.25)" />
        <path fillRule="evenodd" d="M732 529Q745 531 754 536Q758 542 761 551Q766 568 773 569Q780 567 779 558L783 560L789 558Q790 575 780 580Q768 584 757 573L731 567L728 569zM741 548a4 4 0 1 0 .1 0z" fill="rgba(90,160,175,0.65)" />
        <path d="M731 567L747 569L740 594H723z" fill="rgba(60,150,80,0.65)" />
        <path d="M747 569L758 572L752 594H738z" fill="rgba(205,205,95,0.65)" />
        <BrandName x="801" y="563">TUITUISOFT</BrandName>
        <BrandSite x="874" y="593">腿腿教学网</BrandSite>
    </Watermark>
);

const App = () => (
    <Page>
        <GlobalStyle />
        <Header>
            <AppButton aria-label="Revit">
                <Svg width="14" height="18" viewBox="0 0 14 18">
                    <path d="M3 2h6q4 0 4 4 0 3-3 4l3 6-4-2-2-4-2 1-1 5-3-2z" fill="#1d3f9c" stroke="#14286a" />
                    <path d="M6 5h3q1 1 0 3H6z" fill="#e8ecf8" stroke="none" />
                </Svg>
                <Caret />
            </AppButton>
            <TitleBar>
                <QuickAccess>
                    {quickTools.map((tool, i) => (
                        <QuickButton key={i} $width={tool.w} $active={tool.active} aria-label={tool.icon}>
                            {tool.icon && <Icon name={tool.icon} size={10} />}
                            {tool.text && <b>{tool.text}</b>}
                            {!tool.icon && !tool.text && <Caret />}
                        </QuickButton>
                    ))}
                </QuickAccess>
                <Title>
                    <span>Autodesk Revit 2016 -</span>
                    <span>Residential_Sample_Project - 楼层平面: first floor 副本 1</span>
                </Title>
                <InfoCenter>
                    <Caret />
                    <SearchInput placeholder="键入关键字或短语" aria-label="搜索" />
                    <InfoButton aria-label="查找"><Icon name="binoculars" size={9} /></InfoButton>
                    <InfoButton aria-label="通讯"><Icon name="dish" size={9} /></InfoButton>
                    <InfoButton aria-label="收藏"><Icon name="star" size={9} /></InfoButton>
                    <InfoButton><Icon name="person" size={9} />登录</InfoButton>
                    <Spacer $width={26} />
                    <Caret />
                    <InfoButton aria-label="Exchange"><Icon name="exchange" size={9} /></InfoButton>
                    <Spacer $width={2} />
                    <InfoButton aria-label="帮助"><Icon name="help" size={10} /></InfoButton>
                    <Caret />
                </InfoCenter>
                <WindowButtons>
                    <WindowButton $width={17} aria-label="最小化"><Svg width="8" height="8" viewBox="0 0 8 8"><path d="M1 3h6v2H1z" fill="#fff" /></Svg></WindowButton>
                    <WindowButton $width={15} aria-label="还原"><Svg width="8" height="8" viewBox="0 0 8 8"><path d="M3 1h4v4M1 3h4v4H1z" /></Svg></WindowButton>
                    <WindowButton $width={26} aria-label="关闭"><Svg width="8" height="8" viewBox="0 0 8 8"><path d="M1 1l6 6M7 1L1 7" strokeWidth="2" /></Svg></WindowButton>
                </WindowButtons>
            </TitleBar>
            <Tabs>
                {tabs.map((tab) => <Tab key={tab} $active={tab === '视图'}>{tab}</Tab>)}
                <TabOptions aria-label="显示选项">
                    <Svg width="9" height="6" viewBox="0 0 9 6"><rect x=".5" y=".5" width="8" height="5" rx="1" fill="#ddd" /><path d="M3 4l1.500-2L6 4z" fill="#444" /></Svg>
                    <Caret />
                </TabOptions>
            </Tabs>
        </Header>

        <Ribbon>
            <Panel>
                <PanelBody>
                    <Tool tool={{ icon: 'cursor', lines: ['修改'], w: 24, active: true }} />
                </PanelBody>
                <PanelTitle>选择 <Caret /></PanelTitle>
            </Panel>
            <Panel>
                <PanelBody>
                    {graphicTools.map((tool, i) => <Tool key={i} tool={tool} />)}
                </PanelBody>
                <PanelTitle>
                    <TitleText $fill>图形</TitleText>
                    <Svg width="5" height="5" viewBox="0 0 5 5"><path d="M1 1l3 3M4 1v3H1" /></Svg>
                </PanelTitle>
            </Panel>
            <RibbonPanel title="创建" tools={createTools} />
            <RibbonPanel title="图纸组合" tools={sheetTools} />
            <Panel>
                <PanelBody>
                    <Tool tool={{ icon: 'switchWin', lines: ['切换', '窗口'], w: 26, caret: 'side' }} />
                    <Tool tool={{ icon: 'closeWin', lines: ['关闭', '隐藏对象'], w: 29 }} />
                    <SmallTools>
                        <SmallTool><Icon name="copyWin" size={10} />复制</SmallTool>
                        <SmallTool><Icon name="cascade" size={10} />层叠</SmallTool>
                        <SmallTool><Icon name="tile" size={10} />平铺</SmallTool>
                    </SmallTools>
                    <PanelDivider />
                    <Tool tool={{ icon: 'userUi', lines: ['用户', '界面'], w: 27, caret: 'side' }} />
                </PanelBody>
                <PanelTitle>窗口</PanelTitle>
            </Panel>
        </Ribbon>
        <OptionsBar />

        <Workspace>
            <Properties>
                <PaletteHeader>
                    <span>属性</span>
                    <CloseButton aria-label="关闭属性">✕</CloseButton>
                </PaletteHeader>
                <TypeSelector>
                    <TypeThumb>
                        <Svg width="20" height="20" viewBox="0 0 20 20">
                            <path d="M2 2h9l2 2v12H2z" fill="#f0f1f2" stroke="#9a9da2" />
                            <path d="M8 7h8l2 2v9H8z" fill="#e4e6e8" stroke="#9a9da2" />
                        </Svg>
                    </TypeThumb>
                    <TypeName>楼层平面<br />Floor Plan</TypeName>
                    <Caret />
                </TypeSelector>
                <TypeRow>
                    <TypeSelect aria-label="类型">
                        <option>楼层平面: first floor</option>
                    </TypeSelect>
                    <EditType><Icon name="worksets" size={10} />编辑类型</EditType>
                </TypeRow>
                <PropScroll>
                    <PropGrid>
                        {properties.map((item, i) => <Property key={i} item={item} id={`prop-${i}`} />)}
                    </PropGrid>
                    <Track $width={10}>
                        <CaretUp />
                        <Thumb $grow={14} />
                        <TrackGap $grow={1} />
                        <Caret />
                    </Track>
                </PropScroll>
                <PropFooter>
                    <HelpLink href="#help">属性帮助</HelpLink>
                    <ApplyButton disabled>应用</ApplyButton>
                </PropFooter>
            </Properties>

            <Center>
                <CanvasRow>
                    <Canvas>
                        <FloorPlan />
                        <Callout>
                            <CalloutFrame viewBox="0 0 330 66">
                                <rect x="2" y="2" width="326" height="62" fill="rgba(205,105,48,0.43)" />
                                <path d="M2 2H328V64H2z" fill="none" stroke="#e8430f" strokeWidth="4" strokeDasharray="13.300 10.300" strokeDashoffset="-9" />
                            </CalloutFrame>
                            <CalloutText>通过右键复制创建新视图</CalloutText>
                        </Callout>
                        <ViewButtons>
                            <ViewButton aria-label="最小化视图"><Svg width="7" height="8" viewBox="0 0 7 8"><path d="M0 5h6" stroke="#ddd" strokeWidth="2" /></Svg></ViewButton>
                            <ViewButton aria-label="还原视图"><Svg width="7" height="8" viewBox="0 0 7 8"><path d="M2 1h4v4M1 3h4v4H1z" stroke="#ddd" strokeWidth="1.500" /></Svg></ViewButton>
                            <ViewButton aria-label="关闭视图"><Svg width="7" height="8" viewBox="0 0 7 8"><path d="M1 1l5 6M6 1L1 7" stroke="#ddd" strokeWidth="2" /></Svg></ViewButton>
                        </ViewButtons>
                        <NavBar>
                            <Svg width="11" height="11" viewBox="0 0 11 11"><g stroke="#b8babb"><circle cx="5.500" cy="5.500" r="4.500" fill="#8c8e90" /><circle cx="5.500" cy="5.500" r="2" /></g></Svg>
                            <Svg width="9" height="9" viewBox="0 0 9 9"><path d="M1 1h4v3H1zM4 4l4 4M8 5v3H5" stroke="#b4c4a0" /></Svg>
                        </NavBar>
                    </Canvas>
                    <Track $width={12}>
                        <CaretUp />
                        <VThumb />
                        <Caret />
                    </Track>
                </CanvasRow>
                <ViewBar>
                    <ViewScale>1/4" = 1'-0"</ViewScale>
                    {viewIcons.map((name, i) => <Icon key={i} name={name} size={10} />)}
                    <HTrack><HThumb /></HTrack>
                </ViewBar>
            </Center>

            <Browser>
                <PaletteHeader>
                    <BrowserTitle>项目浏览器 - Residential_Sample_Project</BrowserTitle>
                    <CloseButton aria-label="关闭浏览器">✕</CloseButton>
                </PaletteHeader>
                <TreeArea>
                    <Tree>
                        {tree.map((node, i) => <TreeNode key={i} node={node} />)}
                    </Tree>
                    <Track $width={9}>
                        <CaretUp />
                        <Thumb $grow={11} />
                        <TrackGap $grow={1} />
                        <Caret />
                    </Track>
                </TreeArea>
                <BrowserScroll><BrowserThumb /></BrowserScroll>
                <Highlight />
            </Browser>
        </Workspace>

        <StatusBar>
            <StatusText>单击可进行选择; 按 Tab 键并单击可选择其他项目; 按 Ctrl 键并单击可将新项目添加到选择集; 按 Shift 键并单击可取消选择。</StatusText>
            <StatusGroup $width={14}><Icon name="link" size={10} /></StatusGroup>
            <StatusSelect $width={113} aria-label="工作集"><option></option></StatusSelect>
            <StatusGroup $width={64} $align="center">
                <Icon name="dimension" size={9} />:0
                <Icon name="worksets" size={10} />
                <Icon name="legend" size={10} />
            </StatusGroup>
            <StatusSelect $width={86} aria-label="设计选项"><option>主模型</option></StatusSelect>
            <StatusGroup $width={181} $align="flex-end">
                <Icon name="funnelYellow" size={10} />
                <Icon name="selectX" size={10} />
                <Icon name="selectPin" size={10} />
                <Icon name="selectFace" size={10} />
                <Icon name="drag" size={10} />
                <Icon name="funnel" size={10} />:0
            </StatusGroup>
        </StatusBar>
        <Brand />
    </Page>
);

export default App;
